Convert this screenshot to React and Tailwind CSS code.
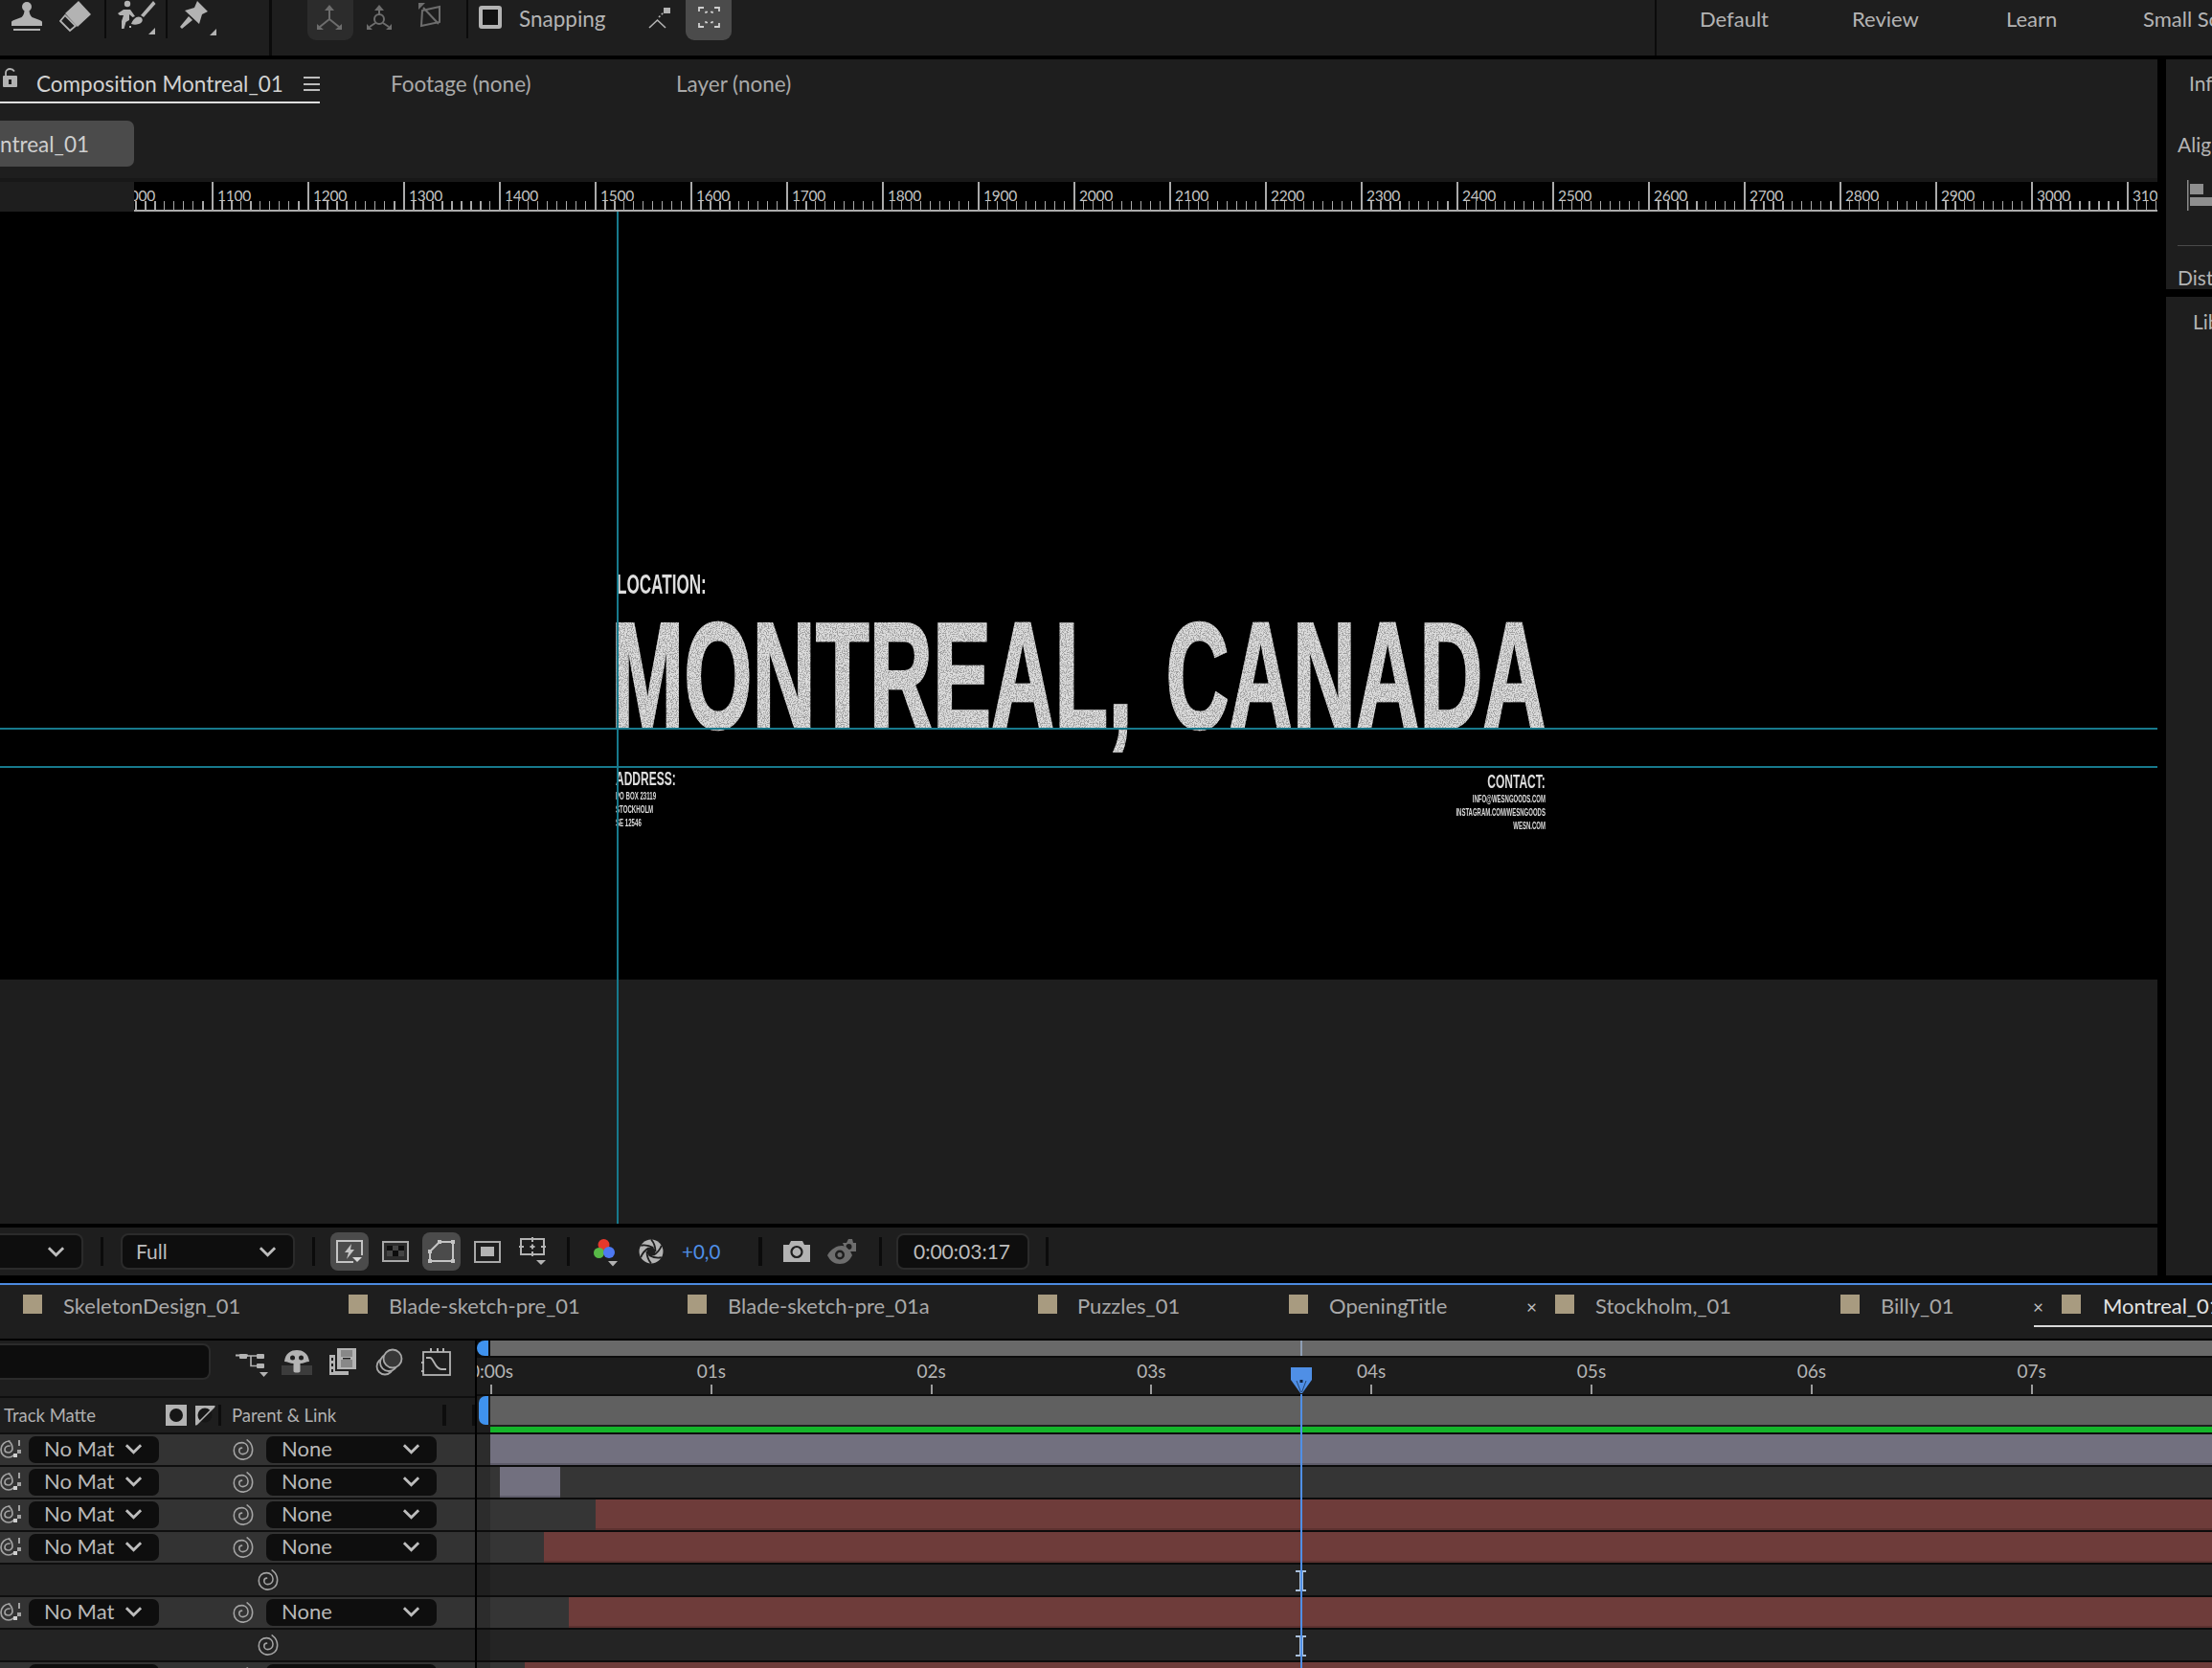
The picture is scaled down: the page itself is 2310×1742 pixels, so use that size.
import React from "react";

const ICON = "#b3b3b3";
const DIM = "#6d6d6d";

const Chevron = ({ className }) => (
  <svg className={className} viewBox="0 0 20 12" fill="none" stroke="#bdbdbd" strokeWidth="3" strokeLinejoin="miter">
    <path d="M2 2 L10 10 L18 2" />
  </svg>
);

const Spiral = ({ className }) => (
  <svg className={className} viewBox="0 0 24 26" fill="none" stroke="#a3a3a3" strokeWidth="1.7" strokeLinecap="round">
    <path d="M17 2 C21 5 23 9 23 13 C23 20 18 24 12 24 C6 24 2 19 2 14 C2 8 6 5 11 5 C15 5 18 8 18 12 C18 16 15 18 12 18 C9.5 18 8 16 8 14 C8 12 9.5 11 11 11" />
  </svg>
);

const LeftSpiral = () => (
  <svg className="w-[23px] h-[24px] shrink-0" viewBox="0 0 23 24" fill="none" stroke="#a3a3a3" strokeWidth="1.7" strokeLinecap="round">
    <path d="M10 3 C5 3 1 7 1 12 C1 17 5 20 9 20 C11 20 13 19 14 18 M10 8 C7 8 5 10 5 12 C5 14 7 15 9 15 C11 15 13 13 13 11 C13 8 12 5 9 3" />
    <rect x="19" y="2" width="2" height="6" fill="#a3a3a3" stroke="none" />
    <rect x="18" y="12" width="4" height="4" fill="#a3a3a3" stroke="none" />
    <rect x="14" y="16" width="4" height="4" fill="#d0d0d0" stroke="none" />
  </svg>
);

function TopBar() {
  return (
    <div className="h-[58px] bg-[#1e1e1e] flex items-start shrink-0">
      <svg className="ml-[12px] mt-[2px] w-[32px] h-[31px] shrink-0" viewBox="12 2 32 31" fill={ICON}>
        <circle cx="28" cy="7" r="5" />
        <path d="M25.5 10 h5 c0 4 1 6 3 8 l8 3 c1.500 .5 2.500 1.500 2.500 2 v4 h-32 v-4 c0 -.5 1 -1.500 2.500 -2 l8 -3 c2 -2 3 -4 3 -8z" />
        <rect x="14" y="30" width="28" height="2" />
      </svg>
      <svg className="ml-[18px] w-[34px] h-[34px] shrink-0" viewBox="62 0 34 34">
        <polygon points="82,1 95,15 81,28 68,14" fill={ICON} />
        <polygon points="68,16 63,22 73,32 79,27" fill="none" stroke={ICON} strokeWidth="1.800" />
      </svg>
      <div className="ml-[13px] w-[2px] h-[40px] bg-[#0b0b0b] shrink-0" />
      <svg className="ml-[11px] w-[42px] h-[37px] shrink-0" viewBox="122 2 42 37" fill={ICON}>
        <circle cx="133" cy="6" r="3.200" />
        <path d="M123 16 L129 12 L136 12 L141 19 L138.500 20 L135 17 L135 23 L131.500 25 L129.500 32 L127 32 L127 24 L129 18 L125 18 Z" />
        <polygon points="160,3 162.500,6 150,20 147,18" />
        <path d="M137 27 C139 22 143 18 147 20 C150 22 149 26 145 27 C142 28 140 28 137 27Z" />
        <rect x="135" y="29" width="2" height="2" />
        <polygon points="155,38 162,38 162,31" />
      </svg>
      <div className="ml-[9px] w-[2px] h-[40px] bg-[#0b0b0b] shrink-0" />
      <svg className="ml-[12px] w-[40px] h-[38px] shrink-0" viewBox="187 1 40 38" fill={ICON}>
        <path d="M206 2 L217 13 L211 16 L208 26 L193 12 L203 9 Z" />
        <polygon points="197,18 201,22 190,31 188,29" />
        <polygon points="219,38 226,38 226,31" />
      </svg>
      <div className="ml-[54px] w-[3px] h-[58px] bg-[#0b0b0b] shrink-0" />
      <div className="ml-[37px] w-[48px] h-[42px] bg-[#2c2c2c] rounded-b-[9px] shrink-0 flex">
        <svg className="w-[48px] h-[42px]" viewBox="320 0 48 42" fill="none" stroke={DIM} strokeWidth="2">
          <path d="M343 20 V9 M343 20 L333 28 M343 20 L353 28" />
          <path d="M338 11 L343 5 L348 11 Z M330 25 V31 H337 Z M356 25 V31 H349 Z" fill={DIM} stroke="none" />
        </svg>
      </div>
      <svg className="ml-[13px] w-[28px] h-[32px] shrink-0" viewBox="381 0 28 32" fill="none" stroke={DIM} strokeWidth="2">
        <circle cx="395" cy="20" r="5" />
        <path d="M395 15 V9 M391 24 L385 28 M399 24 L405 28" />
        <path d="M390 11 L395 5 L400 11 Z M382 25 V31 H388 Z M408 25 V31 H402 Z" fill={DIM} stroke="none" />
      </svg>
      <svg className="ml-[26px] w-[26px] h-[32px] shrink-0" viewBox="435 4 26 28" fill="none" stroke={DIM} strokeWidth="2">
        <path d="M440 13 L458 9 V25 L439 29 Z M441 10 L457 27" />
        <path d="M436 5 H443 L436 12 Z" fill={DIM} stroke="none" />
      </svg>
      <div className="ml-[25px] w-[2px] h-[40px] bg-[#0b0b0b] shrink-0" />
      <div className="ml-[11px] mt-[6px] w-[24px] h-[24px] rounded-[3px] border-[4px] border-[#b3b3b3] bg-[#111111] shrink-0" />
      <div className="ml-[18px] h-[40px] flex items-center text-[22.500px] text-[#b4b4b4] leading-none w-[135px] shrink-0">Snapping</div>
      <svg className="mt-[6px] w-[24px] h-[26px] shrink-0" viewBox="676 6 24 26" fill="none" stroke={ICON} strokeWidth="1.600">
        <path d="M677 29 L685.500 21 L694 29" />
        <path d="M687 18 L693 12" strokeDasharray="2 2" />
        <rect x="692" y="8" width="7" height="6" fill={ICON} stroke="none" />
      </svg>
      <div className="ml-[15px] w-[48px] h-[42px] bg-[#4b4b4b] rounded-b-[9px] shrink-0 flex">
        <svg className="w-[48px] h-[42px]" viewBox="716 0 48 42" fill="none" stroke="#d0d0d0" strokeWidth="1.800">
          <path d="M730 12 V8 H735 M746 8 H751 V12 M730 24 V28 H735 M746 28 H751 V24" />
          <path d="M737 14 V12.500 H739 M742 12.500 H744 V14 M737 22 V23.500 H739 M742 23.500 H744 V22" strokeWidth="1.400" />
        </svg>
      </div>
      <div className="ml-[964px] w-[2px] h-[58px] bg-[#0b0b0b] shrink-0" />
      <div className="flex h-[40px] items-center text-[22px] text-[#b4b4b4] leading-none shrink-0">
        <span className="ml-[45px] w-[159px] shrink-0">Default</span>
        <span className="w-[161px] shrink-0">Review</span>
        <span className="w-[143px] shrink-0">Learn</span>
        <span className="whitespace-nowrap">Small Screen</span>
      </div>
    </div>
  );
}

const ticks = [1000,1100,1200,1300,1400,1500,1600,1700,1800,1900,2000,2100,2200,2300,2400,2500,2600,2700,2800,2900,3000,3100];

function PixelRuler() {
  return (
    <div className="h-[31px] flex shrink-0 bg-black">
      <div className="w-[140px] bg-[#1e1e1e] shrink-0 z-10" />
      <div className="flex-1 overflow-hidden">
        <div className="flex h-[29px] -ml-[19px] w-max">
          {ticks.map((t) => (
            <div key={t} className="w-[100px] h-[29px] shrink-0 border-l-2 border-[#ababab] flex flex-col">
              <div className="h-[20px] pl-[4px] pt-[7px] text-[15.500px] leading-[14px] text-[#c4c4c4] tracking-[-0.2px]">{t}</div>
              <div className="h-[9px] ml-[8px] bg-[repeating-linear-gradient(90deg,#a8a8a8_0,#a8a8a8_1.500px,transparent_1.500px,transparent_10px)]" />
            </div>
          ))}
        </div>
        <div className="h-[2px] bg-[#ababab]" />
      </div>
    </div>
  );
}

function CompTitle() {
  const base = "font-['Liberation_Sans',sans-serif] font-bold text-[#dedede] whitespace-nowrap";
  return (
    <>
      <div className={`absolute left-[644px] top-[375px] origin-left scale-x-[0.59] text-[29px] leading-none ${base}`}>LOCATION:</div>
      <div className="absolute left-[638px] top-[405px] w-[1760px] h-[190px] [filter:url(#grain)]">
        <div className={`origin-left scale-x-[0.58] text-[158px] leading-none w-max [word-spacing:16px] [-webkit-text-stroke:2.500px_#dedede] ${base}`}>MONTREAL, CANADA</div>
      </div>
      <div className={`absolute left-[643px] top-[582px] origin-left scale-x-[0.6] text-[20px] leading-none ${base}`}>ADDRESS:</div>
      <div className={`absolute left-[643px] top-[604px] flex flex-col origin-left scale-x-[0.61] text-[10px] leading-[14px] ${base}`}>
        <span>PO BOX 23119</span>
        <span>STOCKHOLM</span>
        <span>SE 12546</span>
      </div>
      <div className={`absolute right-[639px] top-[585px] origin-right scale-x-[0.6] text-[20px] leading-none ${base}`}>CONTACT:</div>
      <div className={`absolute right-[639px] top-[607px] flex flex-col items-end origin-right scale-x-[0.6] text-[10px] leading-[14px] ${base}`}>
        <span>INFO@WESNGOODS.COM</span>
        <span>INSTAGRAM.COM/WESNGOODS</span>
        <span>WESN.COM</span>
      </div>
    </>
  );
}

function ViewerControls() {
  const S = "w-[3px] h-[30px] bg-[#0b0b0b] shrink-0";
  const blades = [0, 60, 120, 180, 240, 300];
  return (
    <div className="h-[50px] bg-[#1e1e1e] flex items-center shrink-0 relative">
      <div className="w-[87px] h-[38px] bg-[#0e0e0e] border-2 border-l-0 border-[#2b2b2b] rounded-r-[8px] flex items-center justify-end pr-[17px] shrink-0">
        <Chevron className="w-[19px] h-[12px]" />
      </div>
      <div className={`ml-[18px] ${S}`} />
      <div className="ml-[18px] w-[182px] h-[38px] bg-[#0e0e0e] border-2 border-[#2b2b2b] rounded-[8px] flex items-center justify-between pl-[14px] pr-[17px] text-[21px] text-[#bdbdbd] shrink-0">
        <span>Full</span>
        <Chevron className="w-[19px] h-[12px]" />
      </div>
      <div className={`ml-[18px] ${S}`} />
      <div className="ml-[16px] w-[40px] h-[40px] rounded-[8px] bg-[#4b4b4b] shrink-0 flex">
        <svg className="w-[40px] h-[40px]" viewBox="344 1288 40 40" fill="none" stroke="#c4c4c4" strokeWidth="2">
          <path d="M368 1319 H351 V1297 H377 V1312" />
          <path d="M366 1300 L359 1309 H363 L361 1316 L369 1306 H365 Z" fill="#c4c4c4" stroke="none" />
          <polygon points="367,1314 377,1314 372,1319" fill="#d8d8d8" stroke="none" />
        </svg>
      </div>
      <svg className="ml-[14px] w-[28px] h-[22px] shrink-0" viewBox="398 1298 28 22">
        <rect x="398" y="1298" width="28" height="22" fill="#2c2c2c" />
        <path d="M403 1303 h6 v5 h-6z M415 1303 h6 v5 h-6z M409 1308 h6 v6 h-6z" fill="#0d0d0d" />
        <path d="M409 1303 h6 v5 h-6z M403 1308 h6 v6 h-6z M415 1308 h6 v6 h-6z" fill="#444444" />
        <rect x="399" y="1299" width="26" height="20" fill="none" stroke="#a8a8a8" strokeWidth="2" />
      </svg>
      <div className="ml-[14px] w-[40px] h-[40px] rounded-[8px] bg-[#4b4b4b] shrink-0 flex">
        <svg className="w-[40px] h-[40px]" viewBox="440 1288 40 40" fill="none" stroke="#c4c4c4" strokeWidth="2">
          <path d="M448 1308 L458 1298 H472 V1318 H448 Z" />
          <path d="M446 1306 h4 v4 h-4z M456 1296 h4 v4 h-4z M470 1296 h4 v4 h-4z M470 1316 h4 v4 h-4z M446 1316 h4 v4 h-4z" fill="#c4c4c4" stroke="none" />
        </svg>
      </div>
      <div className="ml-[14px] w-[28px] h-[23px] border-[2px] border-[#a8a8a8] flex items-center justify-center shrink-0">
        <div className="w-[14px] h-[10px] bg-[#b3b3b3]" />
      </div>
      <svg className="ml-[19px] w-[29px] h-[30px] shrink-0" viewBox="541 1295 29 30" fill="none" stroke={ICON} strokeWidth="2">
        <rect x="543" y="1297" width="24" height="16" />
        <path d="M555 1295 V1300 M555 1310 V1315 M541 1305 H546 M564 1305 H569 M552.500 1305 H557.500 M555 1302.500 V1307.500" />
        <polygon points="559,1319 569,1319 564,1324" fill={ICON} stroke="none" />
      </svg>
      <div className={`ml-[21px] ${S}`} />
      <svg className="ml-[24px] w-[26px] h-[32px] shrink-0" viewBox="619 1292 26 32">
        <circle cx="630.500" cy="1301" r="6" fill="#e6382c" />
        <circle cx="625.500" cy="1309.500" r="5.500" fill="#58b947" />
        <circle cx="636" cy="1309" r="6" fill="#4e79f2" />
        <polygon points="635,1318 645,1318 640,1323.500" fill={ICON} />
      </svg>
      <svg className="ml-[22px] w-[26px] h-[26px] shrink-0" viewBox="667 1295 26 26" fill="none">
        <circle cx="680" cy="1308" r="12.500" fill={ICON} />
        <g stroke="#1e1e1e" strokeWidth="1.800">
          {blades.map((a) => (
            <path key={a} d="M684.500 1308 C684.500 1302 683 1299 680 1295.500" transform={`rotate(${a} 680 1308)`} />
          ))}
        </g>
        <circle cx="680" cy="1308" r="4.500" fill="#1e1e1e" />
      </svg>
      <span className="ml-[19px] w-[42px] text-[20.500px] text-[#4f8fe6] whitespace-nowrap shrink-0">+0,0</span>
      <div className="ml-[38px] w-[4px] h-[30px] bg-[#0b0b0b] shrink-0" />
      <svg className="ml-[22px] w-[28px] h-[22px] shrink-0" viewBox="818 1298 28 22">
        <path d="M818 1302 H824 L826 1298 H838 L840 1302 H846 V1320 H818 Z" fill={ICON} />
        <circle cx="832" cy="1309.500" r="5.500" fill="none" stroke="#1e1e1e" strokeWidth="2.200" />
      </svg>
      <svg className="ml-[18px] w-[31px] h-[27px] shrink-0" viewBox="864 1293 31 27">
        <path d="M880 1297 H884 L886 1293 H890 L891 1297 H894 V1306 H884 Z" fill={DIM} />
        <circle cx="886.500" cy="1301" r="3" fill="#1e1e1e" />
        <path d="M864 1310 C868 1303 874 1300 879 1300 C884 1300 888 1305 890 1310 C887 1316 883 1319 877 1319 C871 1319 867 1316 864 1310Z" fill={DIM} />
        <circle cx="877" cy="1309.500" r="5" fill="#1e1e1e" />
        <circle cx="877" cy="1309.500" r="2.500" fill={DIM} />
      </svg>
      <div className={`ml-[23px] ${S}`} />
      <div className="ml-[15px] w-[139px] h-[38px] bg-[#0e0e0e] border-2 border-[#2b2b2b] rounded-[8px] flex items-center pl-[16px] text-[21px] text-[#bdbdbd] shrink-0">0:00:03:17</div>
      <div className={`ml-[17px] ${S}`} />
    </div>
  );
}

const tabs = [
  { n: "SkeletonDesign_01", c: "w-[340px]", t: "ml-[22px]" },
  { n: "Blade-sketch-pre_01", c: "w-[354px]", t: "ml-[22px]" },
  { n: "Blade-sketch-pre_01a", c: "w-[366px]", t: "ml-[22px]" },
  { n: "Puzzles_01", c: "w-[262px]", t: "ml-[21px]" },
  { n: "OpeningTitle", c: "w-[278px]", t: "ml-[22px]", x: true },
  { n: "Stockholm,_01", c: "w-[298px]", t: "ml-[22px]" },
  { n: "Billy_01", c: "w-[231px]", t: "ml-[22px]", x: true },
  { n: "Montreal_01", c: "w-[157px]", t: "ml-[23px] text-[#e2e2e2]" },
];

function TabRow() {
  return (
    <div className="h-[56px] bg-[#1e1e1e] flex pl-[24px] pt-[10px] items-start shrink-0 relative text-[22px] text-[#a9a9a9] leading-[24px]">
      {tabs.map((t) => (
        <div key={t.n} className={`flex shrink-0 ${t.c}`}>
          <div className="w-[20px] h-[20px] bg-[#a89b80] shrink-0" />
          <span className={`whitespace-nowrap ${t.t}`}>{t.n}</span>
          {t.x && <span className="ml-auto mr-[19px] text-[19px] leading-[26px] text-[#bdbdbd]">×</span>}
        </div>
      ))}
      <div className="absolute right-0 top-[42px] w-[186px] h-[2px] bg-[#d8d8d8]" />
    </div>
  );
}

const Drop = ({ children, className }) => (
  <div className={`h-[28px] bg-[#0e0e0e] rounded-[7px] flex items-center justify-between text-[22px] text-[#b8b8b8] leading-none shrink-0 pb-[2px] ${className}`}>
    {children}
  </div>
);

function LayerLeft({ full }) {
  if (!full) {
    return (
      <div className="h-[32px] bg-[#232323] flex items-center pl-[268px] shrink-0">
        <Spiral className="w-[23px] h-[24px]" />
      </div>
    );
  }
  return (
    <div className="h-[32px] bg-[#333333] flex items-center shrink-0">
      <LeftSpiral />
      <Drop className="ml-[7px] w-[136px] pl-[16px] pr-[17px]">
        <span>No Mat</span>
        <Chevron className="w-[19px] h-[12px]" />
      </Drop>
      <Spiral className="ml-[76px] w-[23px] h-[24px] shrink-0" />
      <Drop className="ml-[13px] w-[178px] pl-[16px] pr-[17px]">
        <span>None</span>
        <Chevron className="w-[19px] h-[12px]" />
      </Drop>
    </div>
  );
}

const rowsLeft = [true, true, true, true, false, true, false, true];

function TimelineLeft() {
  return (
    <div className="w-[496px] shrink-0 flex flex-col bg-[#0f0f0f] gap-[2px]">
      <div className="h-[58px] bg-[#1e1e1e] pt-[3px] flex items-start shrink-0">
        <div className="w-[220px] h-[38px] bg-[#0d0d0d] border-2 border-l-0 border-[#2b2b2b] rounded-r-[8px] shrink-0" />
        <svg className="ml-[26px] mt-[5px] w-[35px] h-[31px] shrink-0" viewBox="246 1408 35 31" fill={ICON}>
          <rect x="246" y="1414.500" width="13" height="2" />
          <rect x="250" y="1414" width="8" height="5" rx="1" />
          <rect x="268" y="1414" width="8" height="5" rx="1" />
          <rect x="268" y="1424" width="8" height="5" rx="1" />
          <path d="M258 1416 H268 M262 1416 V1426.500 H268" fill="none" stroke={ICON} strokeWidth="1.600" />
          <polygon points="271,1433 280,1433 275.500,1438" />
        </svg>
        <svg className="ml-[13px] mt-[5px] w-[32px] h-[28px] shrink-0" viewBox="294 1408 32 28">
          <rect x="294" y="1426" width="32" height="10" fill="#3c3c3c" />
          <path d="M297 1422 C298 1413 304 1410 310 1410 C316 1410 322 1413 323 1422 C320 1422 317 1424 313.500 1424 V1432 C313.500 1434 306.500 1434 306.500 1432 V1424 C303 1424 300 1422 297 1422Z" fill={ICON} />
          <circle cx="305.500" cy="1418" r="2.500" fill="#1e1e1e" />
          <circle cx="314.500" cy="1418" r="2.500" fill="#1e1e1e" />
        </svg>
        <svg className="ml-[18px] mt-[5px] w-[29px] h-[28px] shrink-0" viewBox="344 1410 29 28" fill={ICON}>
          <path d="M352 1410 H372 V1432 H352 Z" />
          <path d="M356 1412 H368 V1419 H356 Z M356 1422 H368 V1430 H356 Z" fill="#888888" />
          <rect x="358" y="1420" width="8" height="1.500" fill="#1e1e1e" />
          <path d="M344 1417 H350 V1434 H364 V1438 H344 Z" />
          <path d="M346 1420 h2 v3 h-2z M346 1426 h2 v3 h-2z M346 1432 h2 v3 h-2z" fill="#1e1e1e" />
        </svg>
        <svg className="ml-[19px] mt-[5px] w-[29px] h-[29px] shrink-0" viewBox="392 1409 29 29" fill="none" stroke="#a8a8a8" strokeWidth="1.800">
          <circle cx="402" cy="1428" r="8.500" />
          <circle cx="406" cy="1424" r="9" fill="#1e1e1e" />
          <circle cx="410" cy="1420" r="9.500" fill="#383838" />
        </svg>
        <svg className="ml-[19px] mt-[4px] w-[32px] h-[31px] shrink-0" viewBox="439 1408 32 31" fill="none" stroke={ICON} strokeWidth="1.800">
          <rect x="441" y="1413" width="28" height="24" />
          <path d="M444 1419 H448 C452 1419 453 1431 460 1431 H465" />
          <path d="M449 1409 V1413 M456 1409 V1413 M462 1409 V1413 M439 1424 H442 M439 1433 H442" strokeWidth="2" />
        </svg>
      </div>
      <div className="h-[36px] bg-[#1e1e1e] flex items-center text-[18.500px] text-[#b0b0b0] leading-none shrink-0">
        <span className="ml-[4px] w-[169px]">Track Matte</span>
        <div className="w-[22px] h-[22px] bg-[#b3b3b3] flex items-center justify-center shrink-0">
          <div className="w-[14px] h-[14px] rounded-full bg-[#161616]" />
        </div>
        <svg className="ml-[8px] w-[22px] h-[22px] shrink-0" viewBox="0 0 22 22">
          <path d="M1 1 H22 L1 22 Z" fill="#b3b3b3" />
          <circle cx="11" cy="11" r="7.500" fill="#161616" />
          <path d="M2 21 L21 2" stroke="#b3b3b3" strokeWidth="1.600" />
        </svg>
        <div className="ml-[3px] w-[3px] h-[22px] bg-[#0d0d0d] shrink-0" />
        <span className="ml-[11px] w-[220px] whitespace-nowrap">Parent &amp; Link</span>
        <div className="w-[4px] h-[22px] bg-[#0d0d0d] shrink-0" />
        <div className="ml-[27px] w-[3px] h-[22px] bg-[#0d0d0d] shrink-0" />
      </div>
      {rowsLeft.map((f, i) => (
        <LayerLeft key={i} full={f} />
      ))}
    </div>
  );
}

const Tick = ({ label }) => (
  <div className="w-[229.800px] h-[38px] shrink-0 flex flex-col items-center">
    <span className="h-[28px] pt-[4px] text-[19px] leading-[19px] text-[#b4b4b4] whitespace-nowrap">{label}</span>
    <div className="w-[2px] h-[10px] bg-[#9d9d9d]" />
  </div>
);

const PURPLE = "bg-[#72707f] border-b-2 border-[#5f5d6b]";
const RED = "bg-[#6e3c3a] border-b-2 border-[#5d3230]";

function RedTrack({ cls }) {
  return (
    <div className="flex-1 h-[32px] flex bg-[#353535]">
      <div className={`shrink-0 ${cls}`} />
      <div className={`flex-1 ${RED}`} />
    </div>
  );
}

const Beam = () => (
  <div className="absolute left-[855px] top-[6px] w-[11px] h-[22px] flex flex-col items-center">
    <div className="w-[11px] h-[2px] bg-[#a9c0dc]" />
    <div className="w-[4px] flex-1 bg-[#a9c0dc]" />
    <div className="w-[11px] h-[2px] bg-[#a9c0dc]" />
  </div>
);

function TimelineRight() {
  return (
    <div className="flex-1 relative flex flex-col bg-[#0c0c0c] overflow-hidden">
      <div className="h-[16px] flex shrink-0">
        <div className="w-[12px] bg-[#3f92ee] rounded-l-[8px] shrink-0" />
        <div className="ml-[2px] flex-1 bg-[#696969]" />
      </div>
      <div className="mt-[2px] h-[38px] bg-[#1c1c1c] flex shrink-0 overflow-hidden">
        <div className="flex -ml-[99.900px] w-max">
          <Tick label="0:00s" />
          <Tick label="01s" />
          <Tick label="02s" />
          <Tick label="03s" />
          <Tick label="04s" />
          <Tick label="05s" />
          <Tick label="06s" />
          <Tick label="07s" />
          <Tick label="08s" />
        </div>
      </div>
      <div className="mt-[2px] h-[30px] flex bg-[#1e1e1e] shrink-0">
        <div className="ml-[2px] w-[10px] bg-[#3f92ee] rounded-l-[7px] shrink-0" />
        <div className="ml-[2px] flex-1 bg-[#606060]" />
      </div>
      <div className="h-[8px] flex shrink-0 bg-[#1e1e1e]">
        <div className="ml-[14px] flex-1 flex flex-col pt-[2px]">
          <div className="h-[6px] bg-[#15b52a]" />
        </div>
      </div>
      <div className="flex flex-col gap-[2px] pt-[2px]">
        <div className="h-[32px] flex shrink-0">
          <div className="w-[14px] bg-[#2c2c2c] shrink-0" />
          <div className={`flex-1 ${PURPLE}`} />
        </div>
        <div className="h-[32px] flex shrink-0">
          <div className="w-[14px] bg-[#2c2c2c] shrink-0" />
          <div className="flex-1 flex bg-[#353535]">
            <div className="w-[10px] shrink-0" />
            <div className={`w-[63px] shrink-0 ${PURPLE}`} />
          </div>
        </div>
        <div className="h-[32px] flex shrink-0">
          <div className="w-[14px] bg-[#2c2c2c] shrink-0" />
          <RedTrack cls="w-[110px]" />
        </div>
        <div className="h-[32px] flex shrink-0">
          <div className="w-[14px] bg-[#2c2c2c] shrink-0" />
          <RedTrack cls="w-[56px]" />
        </div>
        <div className="h-[32px] flex relative shrink-0">
          <div className="w-[14px] bg-[#1f1f1f] shrink-0" />
          <div className="flex-1 bg-[#242424]" />
          <Beam />
        </div>
        <div className="h-[32px] flex shrink-0">
          <div className="w-[14px] bg-[#2c2c2c] shrink-0" />
          <RedTrack cls="w-[82px]" />
        </div>
        <div className="h-[32px] flex relative shrink-0">
          <div className="w-[14px] bg-[#1f1f1f] shrink-0" />
          <div className="flex-1 bg-[#242424]" />
          <Beam />
        </div>
        <div className="h-[32px] flex shrink-0">
          <div className="w-[14px] bg-[#2c2c2c] shrink-0" />
          <RedTrack cls="w-[36px]" />
        </div>
      </div>
      <div className="absolute left-[859.500px] top-0 w-[2px] h-[16px] bg-[#8f9fb5]" />
      <svg className="absolute left-[850px] top-[28px] w-[22px] h-[28px]" viewBox="0 0 22 28">
        <path d="M0 0 H22 V13 L12 27 H10 L0 13 Z" fill="#4f8fe6" />
        <rect x="9.500" y="13" width="3" height="3" fill="#10233f" />
        <path d="M6 14 L10.500 26 M16 14 L11.500 26" stroke="#1c3557" strokeWidth="0.800" />
      </svg>
      <div className="absolute left-[859.500px] top-[56px] bottom-0 w-[2px] bg-[#4f8fe6]" />
    </div>
  );
}

export default function App() {
  return (
    <div className="w-[2310px] h-[1742px] bg-black overflow-hidden flex flex-col font-['Lato','Noto_Sans',sans-serif] text-[#b4b4b4]">
      <svg className="w-0 h-0 absolute">
        <defs>
          <filter id="grain" x="0" y="0" width="100%" height="100%">
            <feTurbulence type="fractalNoise" baseFrequency="0.85" numOctaves="2" seed="4" result="n" />
            <feColorMatrix in="n" type="matrix" values="0 0 0 0 0.35  0 0 0 0 0.35  0 0 0 0 0.35  0 0 0 -6 3.300" result="s" />
            <feComposite in="s" in2="SourceGraphic" operator="in" result="c" />
            <feMerge>
              <feMergeNode in="SourceGraphic" />
              <feMergeNode in="c" />
            </feMerge>
          </filter>
        </defs>
      </svg>
      <TopBar />
      <div className="mt-[4px] h-[1270px] flex shrink-0">
        <div className="w-[2253px] flex flex-col shrink-0">
          <div className="h-[124px] bg-[#1e1e1e] shrink-0 flex flex-col">
            <div className="h-[46px] flex items-start text-[22.500px] leading-[52px] text-[#a9a9a9]">
              <div className="w-[334px] h-[46px] border-b-2 border-[#dedede] flex shrink-0">
                <svg className="ml-[3px] mt-[9px] w-[16px] h-[21px] shrink-0" viewBox="0 0 16 21" fill={ICON}>
                  <path d="M3 9 V5 C3 2.500 5 1 7.500 1 C9.500 1 11 2 12 3.500" fill="none" stroke={ICON} strokeWidth="1.800" />
                  <rect x="0" y="8" width="15" height="12" rx="1" />
                  <rect x="6" y="12" width="3" height="5" fill="#1e1e1e" />
                </svg>
                <span className="ml-[19px] w-[279px] text-[#d2d2d2] whitespace-nowrap shrink-0">Composition Montreal_01</span>
                <div className="mt-[18px] w-[17px] h-[15px] border-y-2 border-[#bdbdbd] flex items-center shrink-0">
                  <div className="w-full h-[2px] bg-[#bdbdbd]" />
                </div>
              </div>
              <span className="ml-[74px] w-[298px] shrink-0">Footage (none)</span>
              <span>Layer (none)</span>
            </div>
            <div className="mt-[18px] w-[140px] h-[48px] bg-[#4b4b4b] rounded-r-[7px] overflow-hidden flex items-center justify-end pr-[47px] pt-[2px] text-[22.500px] text-[#cfcfcf] whitespace-nowrap">
              Montreal_01
            </div>
          </div>
          <div className="h-[4px] bg-[#181818] shrink-0" />
          <PixelRuler />
          <div className="h-[1057px] relative flex flex-col shrink-0 bg-[#1e1e1e] overflow-hidden">
            <div className="h-[802px] bg-black relative shrink-0">
              <CompTitle />
            </div>
            <div className="absolute left-[644px] top-0 bottom-0 w-[1.500px] bg-[#17798c]" />
            <div className="absolute left-0 right-0 top-[539px] h-[1.500px] bg-[#17798c]" />
            <div className="absolute left-0 right-0 top-[579px] h-[1.500px] bg-[#17798c]" />
          </div>
          <div className="h-[4px] shrink-0" />
          <ViewerControls />
        </div>
        <div className="ml-[9px] flex-1 flex flex-col gap-[8px]">
          <div className="h-[240px] bg-[#1e1e1e] flex flex-col text-[21px] leading-none text-[#b4b4b4] overflow-hidden shrink-0">
            <span className="ml-[24px] mt-[14px] whitespace-nowrap">Info</span>
            <span className="ml-[12px] mt-[43px] whitespace-nowrap">Align</span>
            <svg className="ml-[22px] mt-[27px] w-[26px] h-[32px] shrink-0" viewBox="0 0 26 32">
              <rect x="0" y="0" width="1.500" height="32" fill="#8a8a8a" />
              <rect x="3" y="4" width="14" height="11" fill="#8e8e8e" />
              <rect x="3" y="18" width="23" height="9" fill="#8e8e8e" />
            </svg>
            <div className="ml-[12px] mt-[36px] h-[1px] bg-[#4a4a4a] shrink-0" />
            <span className="ml-[12px] mt-[22px] whitespace-nowrap">Distribute</span>
          </div>
          <div className="flex-1 bg-[#1e1e1e] text-[21px] leading-none text-[#b4b4b4] overflow-hidden pt-[15px] pl-[28px] whitespace-nowrap">
            Libraries
          </div>
        </div>
      </div>
      <div className="mt-[8px] h-[2px] bg-[#4c8be0] shrink-0" />
      <TabRow />
      <div className="mt-[2px] flex flex-1 min-h-0">
        <TimelineLeft />
        <div className="w-[2px] bg-black shrink-0" />
        <TimelineRight />
      </div>
    </div>
  );
}
